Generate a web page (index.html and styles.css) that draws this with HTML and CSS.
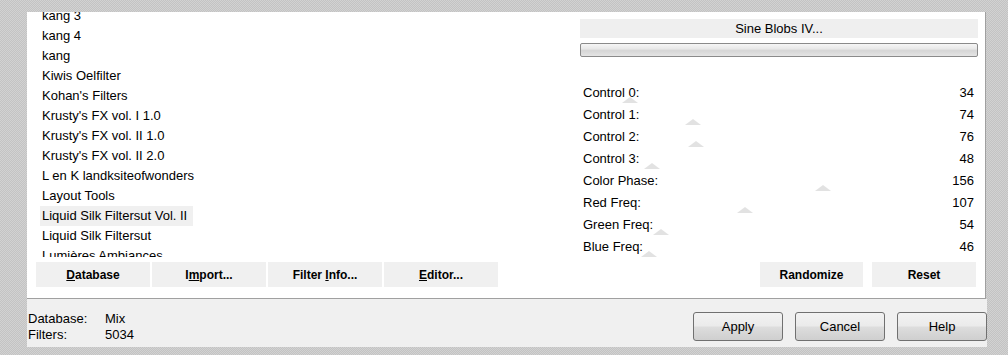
FILE: index.html
```html
<!DOCTYPE html>
<html>
<head>
<meta charset="utf-8">
<link rel="stylesheet" href="styles.css">
</head>
<body>
<div class="dialog">
  <div class="panel">
    <div class="left">
      <div class="listbox">
        <ul class="list">
          <li>kang 3</li>
          <li>kang 4</li>
          <li>kang</li>
          <li>Kiwis Oelfilter</li>
          <li>Kohan's Filters</li>
          <li>Krusty's FX vol. I 1.0</li>
          <li>Krusty's FX vol. II 1.0</li>
          <li>Krusty's FX vol. II 2.0</li>
          <li>L en K landksiteofwonders</li>
          <li>Layout Tools</li>
          <li class="sel">Liquid Silk Filtersut Vol. II</li>
          <li>Liquid Silk Filtersut</li>
          <li>Lumières Ambiances</li>
        </ul>
      </div>
      <div class="btnrow">
        <button class="flat"><u>D</u>atabase</button>
        <button class="flat">I<u>m</u>port...</button>
        <button class="flat">Filter <u>I</u>nfo...</button>
        <button class="flat"><u>E</u>ditor...</button>
      </div>
    </div>
    <div class="right">
      <div class="title">Sine Blobs IV...</div>
      <div class="progress"></div>
      <div class="controls">
        <div class="ctl"><span>Control 0:</span><span>34</span><i class="thumb" style="left:50px"></i></div>
        <div class="ctl"><span>Control 1:</span><span>74</span><i class="thumb" style="left:113px"></i></div>
        <div class="ctl"><span>Control 2:</span><span>76</span><i class="thumb" style="left:116px"></i></div>
        <div class="ctl"><span>Control 3:</span><span>48</span><i class="thumb" style="left:72px"></i></div>
        <div class="ctl"><span>Color Phase:</span><span>156</span><i class="thumb" style="left:243px"></i></div>
        <div class="ctl"><span>Red Freq:</span><span>107</span><i class="thumb" style="left:165px"></i></div>
        <div class="ctl"><span>Green Freq:</span><span>54</span><i class="thumb" style="left:81px"></i></div>
        <div class="ctl"><span>Blue Freq:</span><span>46</span><i class="thumb" style="left:69px"></i></div>
      </div>
      <div class="btnrow2">
        <button class="flat w103">Randomize</button>
        <button class="flat w104">Reset</button>
      </div>
    </div>
  </div>
  <div class="status">
    <div class="info">
      <div class="line"><span class="k">Database:</span><span>Mix</span></div>
      <div class="line"><span class="k">Filters:</span><span>5034</span></div>
    </div>
    <div class="actions">
      <button class="win">Apply</button>
      <button class="win">Cancel</button>
      <button class="win">Help</button>
    </div>
  </div>
</div>
</body>
</html>
```

FILE: styles.css
```css
html, body {
  margin: 0;
  padding: 0;
}
body {
  width: 1008px;
  height: 355px;
  overflow: hidden;
  background: repeating-conic-gradient(#c3c3c3 0 25%, #d2d2d2 0 50%) 0 0 / 2px 2px;
  font-family: "Liberation Sans", Arial, sans-serif;
  font-size: 13px;
  color: #000;
}
.dialog {
  margin: 12px 0 0 27px;
  width: 960px;
}
.panel {
  height: 286px;
  background: #fff;
  border-right: 1px solid #a0a0a0;
  border-bottom: 1px solid #a0a0a0;
  width: 958px;
  display: flex;
}
.left {
  width: 489px;
  padding-left: 9px;
  display: flex;
  flex-direction: column;
}
.listbox {
  height: 245px;
  overflow: hidden;
  padding-left: 4px;
}
.list {
  list-style: none;
  margin: -6px 0 0 0;
  padding: 0;
}
.list li {
  height: 20px;
  line-height: 20px;
  padding-left: 2px;
  white-space: nowrap;
}
.list li.sel {
  background: #f0f0f0;
  width: 151px;
}
.btnrow {
  margin-top: 5px;
  display: flex;
  gap: 2px;
}
button {
  font-family: "Liberation Sans", Arial, sans-serif;
  color: #000;
  padding: 0;
  margin: 0;
  cursor: default;
}
.flat {
  width: 114px;
  height: 25px;
  border: none;
  background: #f0f0f0;
  font-weight: bold;
  font-size: 12px;
}
.right {
  margin-left: auto;
  margin-right: 7px;
  width: 398px;
  padding-top: 7px;
  display: flex;
  flex-direction: column;
}
.title {
  height: 19px;
  line-height: 19px;
  background: #efefef;
  text-align: center;
}
.progress {
  margin-top: 5px;
  height: 12px;
  border: 1px solid #8a8a8a;
  border-radius: 2px;
  background: linear-gradient(#f6f6f6 0%, #e8e8e8 40%, #d6d6d6 55%, #e4e4e4 100%);
}
.controls {
  margin-top: 25px;
}
.ctl {
  position: relative;
  height: 22px;
  line-height: 22px;
  display: flex;
  justify-content: space-between;
  padding: 0 4px 0 3px;
}
.ctl span {
  position: relative;
  z-index: 1;
}
.thumb {
  position: absolute;
  top: 15px;
  width: 0;
  height: 0;
  margin-left: -8px;
  border-left: 8px solid transparent;
  border-right: 8px solid transparent;
  border-bottom: 6px solid #e2e2e2;
}
.btnrow2 {
  margin-top: 4px;
  display: flex;
  justify-content: flex-end;
  gap: 9px;
  padding-right: 2px;
}
.w103 { width: 103px; }
.w104 { width: 104px; }
.status {
  height: 48px;
  background: #f0f0f0;
  display: flex;
  width: 960px;
}
.info {
  padding: 12px 0 0 1px;
}
.line {
  height: 16px;
  line-height: 16px;
  display: flex;
}
.line .k {
  width: 77px;
}
.actions {
  margin-left: auto;
  padding-top: 13px;
  display: flex;
  gap: 12px;
  margin-right: 0;
}
.win {
  width: 90px;
  height: 29px;
  border: 1px solid #707070;
  border-radius: 3px;
  background: linear-gradient(#f2f2f2 0%, #ebebeb 48%, #dddddd 52%, #cfcfcf 100%);
  font-size: 13px;
}
```
